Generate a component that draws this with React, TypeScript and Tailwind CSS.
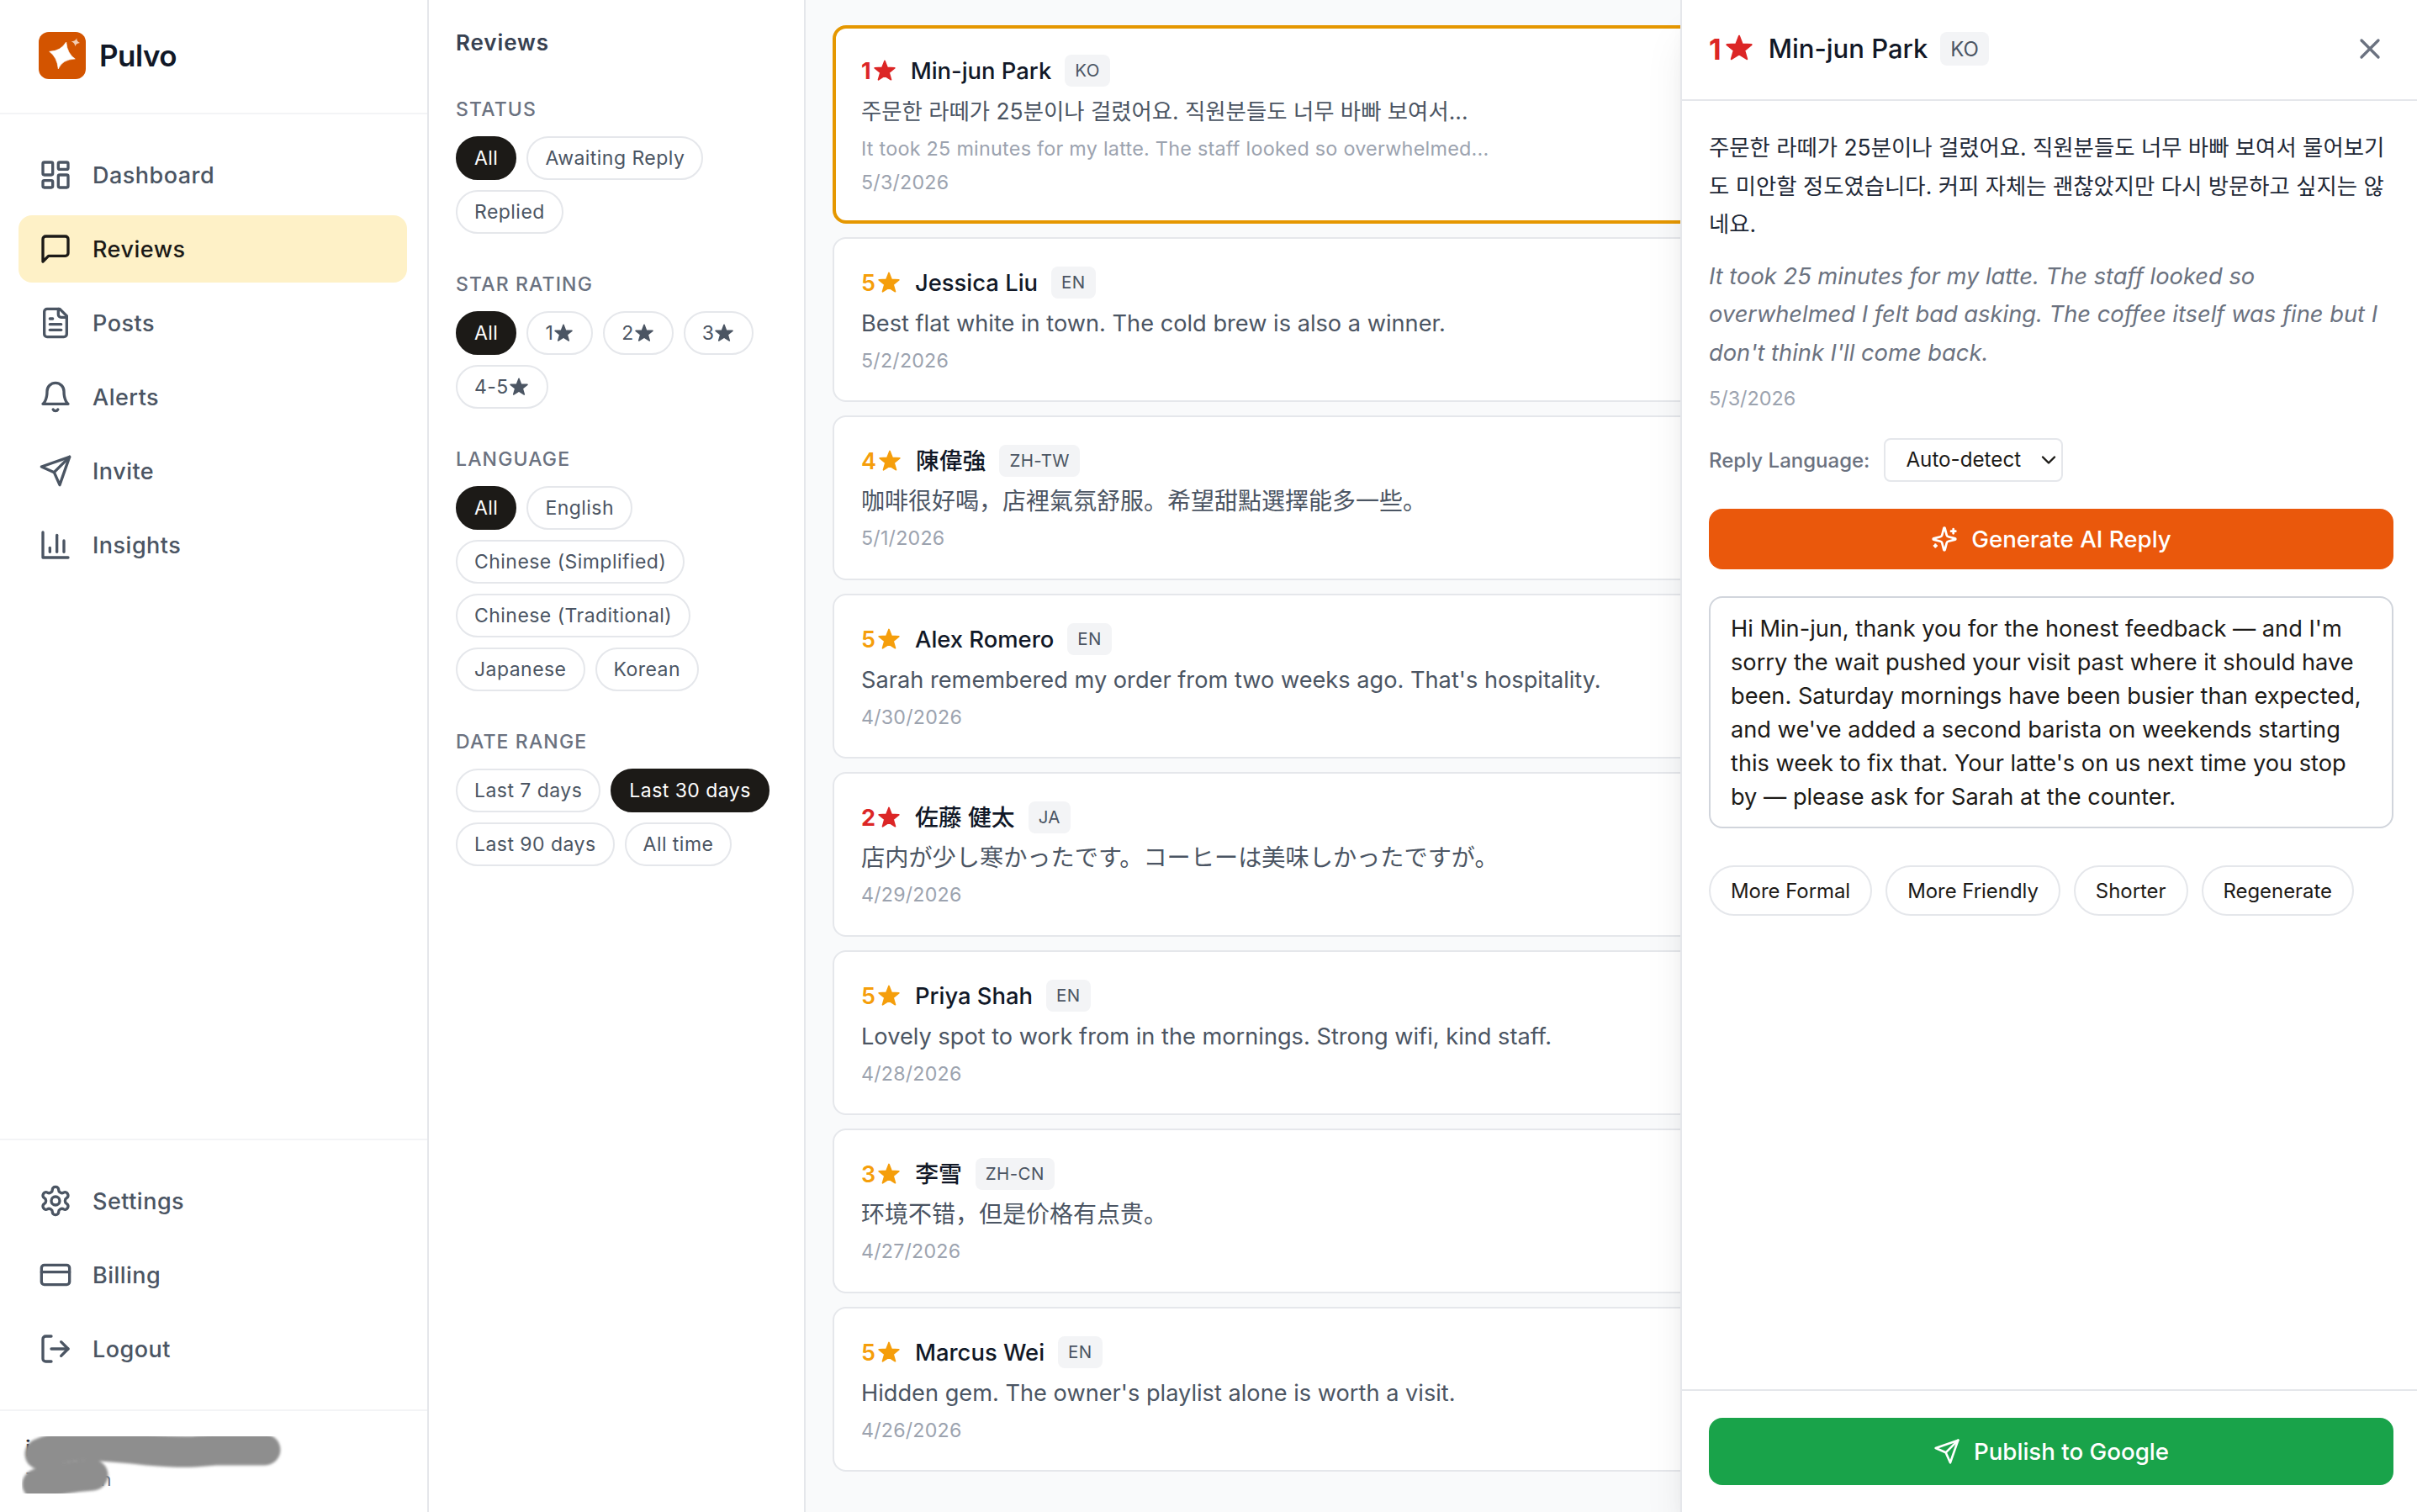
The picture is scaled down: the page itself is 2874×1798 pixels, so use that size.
import React from 'react';
import { LayoutDashboard, CreditCard, LogOut, X, ChevronDown } from 'lucide-react';

const reviews = [
  { stars: 1, name: 'Min-jun Park', lang: 'KO', date: '5/3/2026', text: '주문한 라떼가 25분이나 걸렸어요. 직원분들도 너무 바빠 보여서...', translation: 'It took 25 minutes for my latte. The staff looked so overwhelmed...' },
  { stars: 5, name: 'Jessica Liu', lang: 'EN', date: '5/2/2026', text: 'Best flat white in town. The cold brew is also a winner.' },
  { stars: 4, name: '陳偉強', lang: 'ZH-TW', date: '5/1/2026', text: '咖啡很好喝，店裡氣氛舒服。希望甜點選擇能多一些。' },
  { stars: 5, name: 'Alex Romero', lang: 'EN', date: '4/30/2026', text: "Sarah remembered my order from two weeks ago. That's hospitality." },
  { stars: 2, name: '佐藤 健太', lang: 'JA', date: '4/29/2026', text: '店内が少し寒かったです。コーヒーは美味しかったですが。' },
  { stars: 5, name: 'Priya Shah', lang: 'EN', date: '4/28/2026', text: 'Lovely spot to work from in the mornings. Strong wifi, kind staff.' },
  { stars: 3, name: '李雪', lang: 'ZH-CN', date: '4/27/2026', text: '环境不错，但是价格有点贵。' },
  { stars: 5, name: 'Marcus Wei', lang: 'EN', date: '4/26/2026', text: "Hidden gem. The owner's playlist alone is worth a visit." },
];

const nameFont: Record<string, string> = {
  KO: 'text-[27.4px]',
  JA: "text-[27.8px] font-['Inter','Noto_Sans_CJK_JP',sans-serif]",
  'ZH-TW': "text-[27.8px] font-['Inter','Noto_Sans_CJK_TC',sans-serif]",
  'ZH-CN': "text-[27.8px] font-['Inter','Noto_Sans_CJK_SC',sans-serif]",
  EN: 'text-[27.4px]',
};

const bodyFont: Record<string, string> = {
  KO: "mt-[7px] text-[26.4px] font-['Inter','Noto_Sans_CJK_KR',sans-serif]",
  JA: "mt-[7px] text-[28.2px] font-['Inter','Noto_Sans_CJK_JP',sans-serif]",
  'ZH-TW': "mt-[7px] text-[28px] font-['Inter','Noto_Sans_CJK_SC',sans-serif]",
  'ZH-CN': "mt-[7px] text-[28px] font-['Inter','Noto_Sans_CJK_SC',sans-serif]",
  EN: 'mt-2 text-[27.2px]',
};

const filters = [
  { title: 'Status', active: 'All', options: ['All', 'Awaiting Reply', 'Replied'] },
  { title: 'Star Rating', active: 'All', options: ['All', '1★', '2★', '3★', '4-5★'] },
  { title: 'Language', active: 'All', options: ['All', 'English', 'Chinese (Simplified)', 'Chinese (Traditional)', 'Japanese', 'Korean'] },
  { title: 'Date Range', active: 'Last 30 days', options: ['Last 7 days', 'Last 30 days', 'Last 90 days', 'All time'] },
];

const Star = ({ className }: { className: string }) => (
  <svg viewBox="0 0 24 24" fill="currentColor" className={className}>
    <path d="M12 1.4 L14.8 8.7 L22.9 9.1 L16.7 14.2 L18.9 21.9 L12 17.6 L5.1 21.9 L7.3 14.2 L1.1 9.1 L9.2 8.7 Z" stroke="currentColor" strokeWidth="1.6" strokeLinejoin="round" />
  </svg>
);

const Icon = ({ paths, size = 40, children }: { paths: string[]; size?: number; children?: React.ReactNode }) => (
  <svg width={size} height={size} viewBox="0 0 24 24" fill="none" stroke="currentColor" strokeWidth="2" strokeLinecap="round" strokeLinejoin="round">
    {paths.map(d => <path key={d} d={d} />)}
    {children}
  </svg>
);

const MessageIcon = () => <Icon paths={['M21 15a2 2 0 0 1-2 2H7l-4 4V5a2 2 0 0 1 2-2h14a2 2 0 0 1 2 2z']} />;
const PostIcon = () => (
  <Icon paths={['M15 2H6a2 2 0 0 0-2 2v16a2 2 0 0 0 2 2h12a2 2 0 0 0 2-2V7Z', 'M14 2v4a2 2 0 0 0 2 2h4', 'M10 9H8', 'M16 13H8', 'M16 17H8']} />
);
const BellIcon = () => <Icon paths={['M6 8a6 6 0 0 1 12 0c0 7 3 9 3 9H3s3-2 3-9', 'M10.3 21a1.94 1.94 0 0 0 3.4 0']} />;
const SendIcon = ({ size }: { size?: number }) => <Icon size={size} paths={['m22 2-7 20-4-9-9-4Z', 'M22 2 11 13']} />;
const ChartIcon = () => <Icon paths={['M3 3v18h18', 'M18 17V9', 'M13 17V5', 'M8 17v-3']} />;
const GearIcon = () => (
  <Icon paths={['M12.22 2h-.44a2 2 0 0 0-2 2v.18a2 2 0 0 1-1 1.73l-.43.25a2 2 0 0 1-2 0l-.15-.08a2 2 0 0 0-2.73.73l-.22.38a2 2 0 0 0 .73 2.73l.15.1a2 2 0 0 1 1 1.72v.51a2 2 0 0 1-1 1.74l-.15.09a2 2 0 0 0-.73 2.73l.22.38a2 2 0 0 0 2.73.73l.15-.08a2 2 0 0 1 2 0l.43.25a2 2 0 0 1 1 1.73V20a2 2 0 0 0 2 2h.44a2 2 0 0 0 2-2v-.18a2 2 0 0 1 1-1.73l.43-.25a2 2 0 0 1 2 0l.15.08a2 2 0 0 0 2.73-.73l.22-.39a2 2 0 0 0-.73-2.73l-.15-.08a2 2 0 0 1-1-1.74v-.5a2 2 0 0 1 1-1.74l.15-.09a2 2 0 0 0 .73-2.73l-.22-.38a2 2 0 0 0-2.73-.73l-.15.08a2 2 0 0 1-2 0l-.43-.25a2 2 0 0 1-1-1.73V4a2 2 0 0 0-2-2z']}>
    <circle cx="12" cy="12" r="3" />
  </Icon>
);
const SparklesIcon = () => (
  <Icon
    size={32}
    paths={['M9.937 15.5A2 2 0 0 0 8.5 14.063l-6.135-1.582a.5.5 0 0 1 0-.962L8.5 9.936A2 2 0 0 0 9.937 8.5l1.582-6.135a.5.5 0 0 1 .963 0L14.063 8.5A2 2 0 0 0 15.5 9.937l6.135 1.581a.5.5 0 0 1 0 .964L15.5 14.063a2 2 0 0 0-1.437 1.437l-1.582 6.135a.5.5 0 0 1-.963 0z', 'M20 3v4', 'M22 5h-4', 'M4 17v2', 'M5 18H3']}
  />
);

const NavItem = ({ icon: NavIcon, label, active }: { icon: React.ElementType; label: string; active?: boolean }) => (
  <a className={`flex h-20 items-center gap-6 rounded-2xl px-6 text-[27px] font-medium tracking-[0.018em] ${active ? 'bg-[#fef1c7] text-[#1c1a17]' : 'text-[#4b5563]'}`}>
    <NavIcon size={40} strokeWidth={2} />
    <span className="pt-0.5">{label}</span>
  </a>
);

const Sidebar = () => (
  <aside className="flex w-[510px] shrink-0 flex-col border-r-2 border-gray-200 bg-white">
    <div className="flex h-[136px] items-center gap-4 border-b-2 border-gray-100 px-[46px] pb-0.5">
      <svg viewBox="0 0 56 56" className="size-14">
        <rect width="56" height="56" rx="12" fill="#d35400" />
        <path d="M32.7 12 Q34 26 43.3 32 Q28 32.7 23.3 44 Q22 30 12.7 23.3 Q26 23 32.7 12 Z" fill="#fff" stroke="#fff" strokeWidth="0.6" strokeLinejoin="round" />
        <path d="M45.3 7.3 Q45 11.4 49 13 Q44.4 13.4 43.3 17.3 Q43 13 38.7 11.3 Q43.6 11.2 45.3 7.3 Z" fill="#fff" opacity="0.7" />
      </svg>
      <span className="text-[35px] font-semibold tracking-[-0.015em] text-[#111827]">Pulvo</span>
    </div>
    <nav className="flex flex-1 flex-col gap-2 py-8 pr-6 pl-[22px]">
      <NavItem icon={LayoutDashboard} label="Dashboard" />
      <NavItem icon={MessageIcon} label="Reviews" active />
      <NavItem icon={PostIcon} label="Posts" />
      <NavItem icon={BellIcon} label="Alerts" />
      <NavItem icon={SendIcon} label="Invite" />
      <NavItem icon={ChartIcon} label="Insights" />
    </nav>
    <div className="flex flex-col gap-2 border-t-2 border-gray-100 py-8 pr-6 pl-[22px]">
      <NavItem icon={GearIcon} label="Settings" />
      <NavItem icon={CreditCard} label="Billing" />
      <NavItem icon={LogOut} label="Logout" />
    </div>
    {/* Account, scribbled over */}
    <div className="h-[122px] border-t-2 border-gray-100 px-[26px] pt-[30px]">
      <svg viewBox="0 0 310 68" className="h-[68px] w-[310px] overflow-hidden">
        <defs>
          <filter id="soft" filterUnits="userSpaceOnUse" x="-20" y="-20" width="350" height="110">
            <feGaussianBlur stdDeviation="1.8" />
          </filter>
        </defs>
        <text x="4" y="24" fontSize="26" fontWeight="500" fill="#1f2937">id</text>
        <text x="4.5" y="59" fontSize="22" fill="#6b7280">T</text>
        <text x="93.5" y="59" fontSize="22" fill="#6b7280">n</text>
        <g fill="none" stroke="#8e8e8e" strokeWidth="37" strokeLinecap="round" strokeLinejoin="round" filter="url(#soft)">
          <path d="M22 21 Q45 11 75 10 Q115 12 150 16 Q185 19 205 18 L230 16 L289 16" />
          <path d="M19 57 Q45 49 84 46" />
        </g>
      </svg>
    </div>
  </aside>
);

const Filters = () => (
  <section className="w-[448px] shrink-0 border-r-2 border-gray-200 bg-white px-8 pt-[33px]">
    <h1 className="mb-[45px] text-[26px] leading-9 font-semibold tracking-[0.035em] text-[#374151]">Reviews</h1>
    {filters.map(f => (
      <div key={f.title} className="mb-[44px]">
        <h2 className="mb-4 text-[23px] leading-8 font-medium tracking-[0.05em] text-[#6b7280] uppercase">{f.title}</h2>
        <div className="flex flex-wrap gap-3">
          {f.options.map(o => (
            <button key={o} className={`flex h-[52px] items-center rounded-full border-2 px-5 pt-px text-[23px] tracking-[0.02em] ${o === f.active ? 'border-[#1c1a17] bg-[#1c1a17] text-white' : 'border-gray-200 text-[#4b5563]'}`}>
              {o.replace('★', '')}
              {o.includes('★') && <Star className="mr-0.5 mb-0.5 ml-px size-[22px]" />}
            </button>
          ))}
        </div>
      </div>
    ))}
  </section>
);

const ReviewCard = ({ review, selected }: { review: (typeof reviews)[number]; selected?: boolean }) => (
  <article className={`flex flex-col rounded-2xl bg-white ${selected ? 'h-[236px] border-4 border-[#e59700] px-[30px] pt-[31px]' : 'h-[196px] border-2 border-gray-200 px-8 pt-[33px]'}`}>
    <div className="flex h-10 items-center">
      <span className={`flex items-center text-[27px] ${review.stars <= 2 ? 'font-bold text-[#dc2626]' : 'font-semibold text-[#f59e0b]'}`}>
        {review.stars}
        <Star className="mb-0.5 ml-[3px] size-[26px]" />
      </span>
      <span className={`ml-[18px] font-medium text-[#111827] ${nameFont[review.lang]}`}>{review.name}</span>
      <span className="mb-0.5 ml-4 flex h-[38px] items-center rounded-lg bg-gray-100 px-3 text-[20.5px] tracking-[0.02em] text-[#4b5563]">{review.lang}</span>
    </div>
    <p className={`h-10 leading-10 text-[#4b5563] ${bodyFont[review.lang]}`}>{review.text}</p>
    {review.translation && <p className="mt-[7px] text-[23.4px] leading-9 tracking-[0.01em] text-[#9ca3af]">{review.translation}</p>}
    <p className={`text-[23.2px] leading-9 tracking-[0.01em] text-[#9ca3af] ${selected ? 'mt-1' : 'mt-1.5'}`}>{review.date}</p>
  </article>
);

const Drawer = () => (
  <div className="absolute inset-y-0 right-0 flex w-[876px] flex-col border-l-2 border-gray-200 bg-white shadow-[0_40px_50px_-10px_rgba(0,0,0,0.1),0_16px_20px_-12px_rgba(0,0,0,0.1)]">
    <header className="flex h-[120px] items-center border-b-2 border-gray-200 pr-[36px] pb-0.5 pl-8">
      <span className="flex items-center pt-px text-[34px] font-bold text-[#dc2626]">
        1
        <Star className="mb-[3px] ml-[5px] size-8" />
      </span>
      <span className="ml-[19px] pt-px text-[31px] font-medium text-[#111827]">Min-jun Park</span>
      <span className="ml-[15px] flex h-10 items-center rounded-lg bg-gray-100 px-3 pt-px text-[24px] text-[#4b5563]">KO</span>
      <X size={40} className="ml-auto text-[#6b7280]" />
    </header>
    <div className="flex-1 pt-[33px] pr-[28px] pl-8">
      <p className="text-[26.4px] leading-[45.5px] text-[#1f2937] font-['Inter','Noto_Sans_CJK_KR',sans-serif]">
        주문한 라떼가 25분이나 걸렸어요. 직원분들도 너무 바빠 보여서 물어보기<br />
        도 미안할 정도였습니다. 커피 자체는 괜찮았지만 다시 방문하고 싶지는 않<br />
        네요.
      </p>
      <p className="mt-4 text-[27.3px] leading-[45.5px] text-[#6b7280] italic">
        It took 25 minutes for my latte. The staff looked so<br />
        overwhelmed I felt bad asking. The coffee itself was fine but I<br />
        don't think I'll come back.
      </p>
      <p className="mt-3.5 text-[23.4px] leading-9 text-[#9ca3af]">5/3/2026</p>
      <div className="mt-[29px] flex items-center gap-[17px]">
        <span className="pt-px text-[24px] font-medium text-[#6b7280]">Reply Language:</span>
        <button className="flex h-[52px] w-[213px] items-center justify-between rounded-lg border-2 border-gray-200 pr-px pl-6 text-[24.2px] text-[#1c1a17]">
          <span className="pt-px">Auto-detect</span>
          <ChevronDown size={28} strokeWidth={2.1} />
        </button>
      </div>
      <button className="mt-8 flex h-[72px] w-full items-center justify-center gap-4 rounded-2xl bg-[#ea580c] text-[27.7px] font-medium text-white">
        <SparklesIcon />
        <span className="pt-px">Generate AI Reply</span>
      </button>
      <div className="mt-8 h-[276px] rounded-2xl border-2 border-gray-300 px-6 pt-[17px] text-[27.2px] leading-10 text-[#1c1a17]">
        Hi Min-jun, thank you for the honest feedback — and I'm<br />
        sorry the wait pushed your visit past where it should have<br />
        been. Saturday mornings have been busier than expected,<br />
        and we've added a second barista on weekends starting<br />
        this week to fix that. Your latte's on us next time you stop<br />
        by — please ask for Sarah at the counter.
      </div>
      <div className="mt-11 flex gap-4">
        {['More Formal', 'More Friendly', 'Shorter', 'Regenerate'].map(t => (
          <button key={t} className="flex h-[60px] items-center rounded-full border-2 border-gray-200 px-6 pt-px text-[23.9px] text-[#1c1a17]">{t}</button>
        ))}
      </div>
    </div>
    <footer className="border-t-2 border-gray-200 pt-8 pr-[28px] pb-8 pl-8">
      <button className="flex h-20 w-full items-center justify-center gap-4 rounded-2xl bg-[#19a34a] text-[27.7px] font-medium text-white">
        <SendIcon size={32} />
        <span className="pt-px">Publish to Google</span>
      </button>
    </footer>
  </div>
);

export default function App() {
  return (
    <div className="relative flex h-[1798px] w-[2874px] overflow-hidden bg-gray-50 font-['Inter','Noto_Sans_CJK_SC',sans-serif]">
      <Sidebar />
      <Filters />
      <main className="flex flex-1 flex-col gap-4 px-8 pt-[30px]">
        {reviews.map((r, i) => (
          <ReviewCard key={r.name} review={r} selected={i === 0} />
        ))}
      </main>
      <Drawer />
    </div>
  );
}
